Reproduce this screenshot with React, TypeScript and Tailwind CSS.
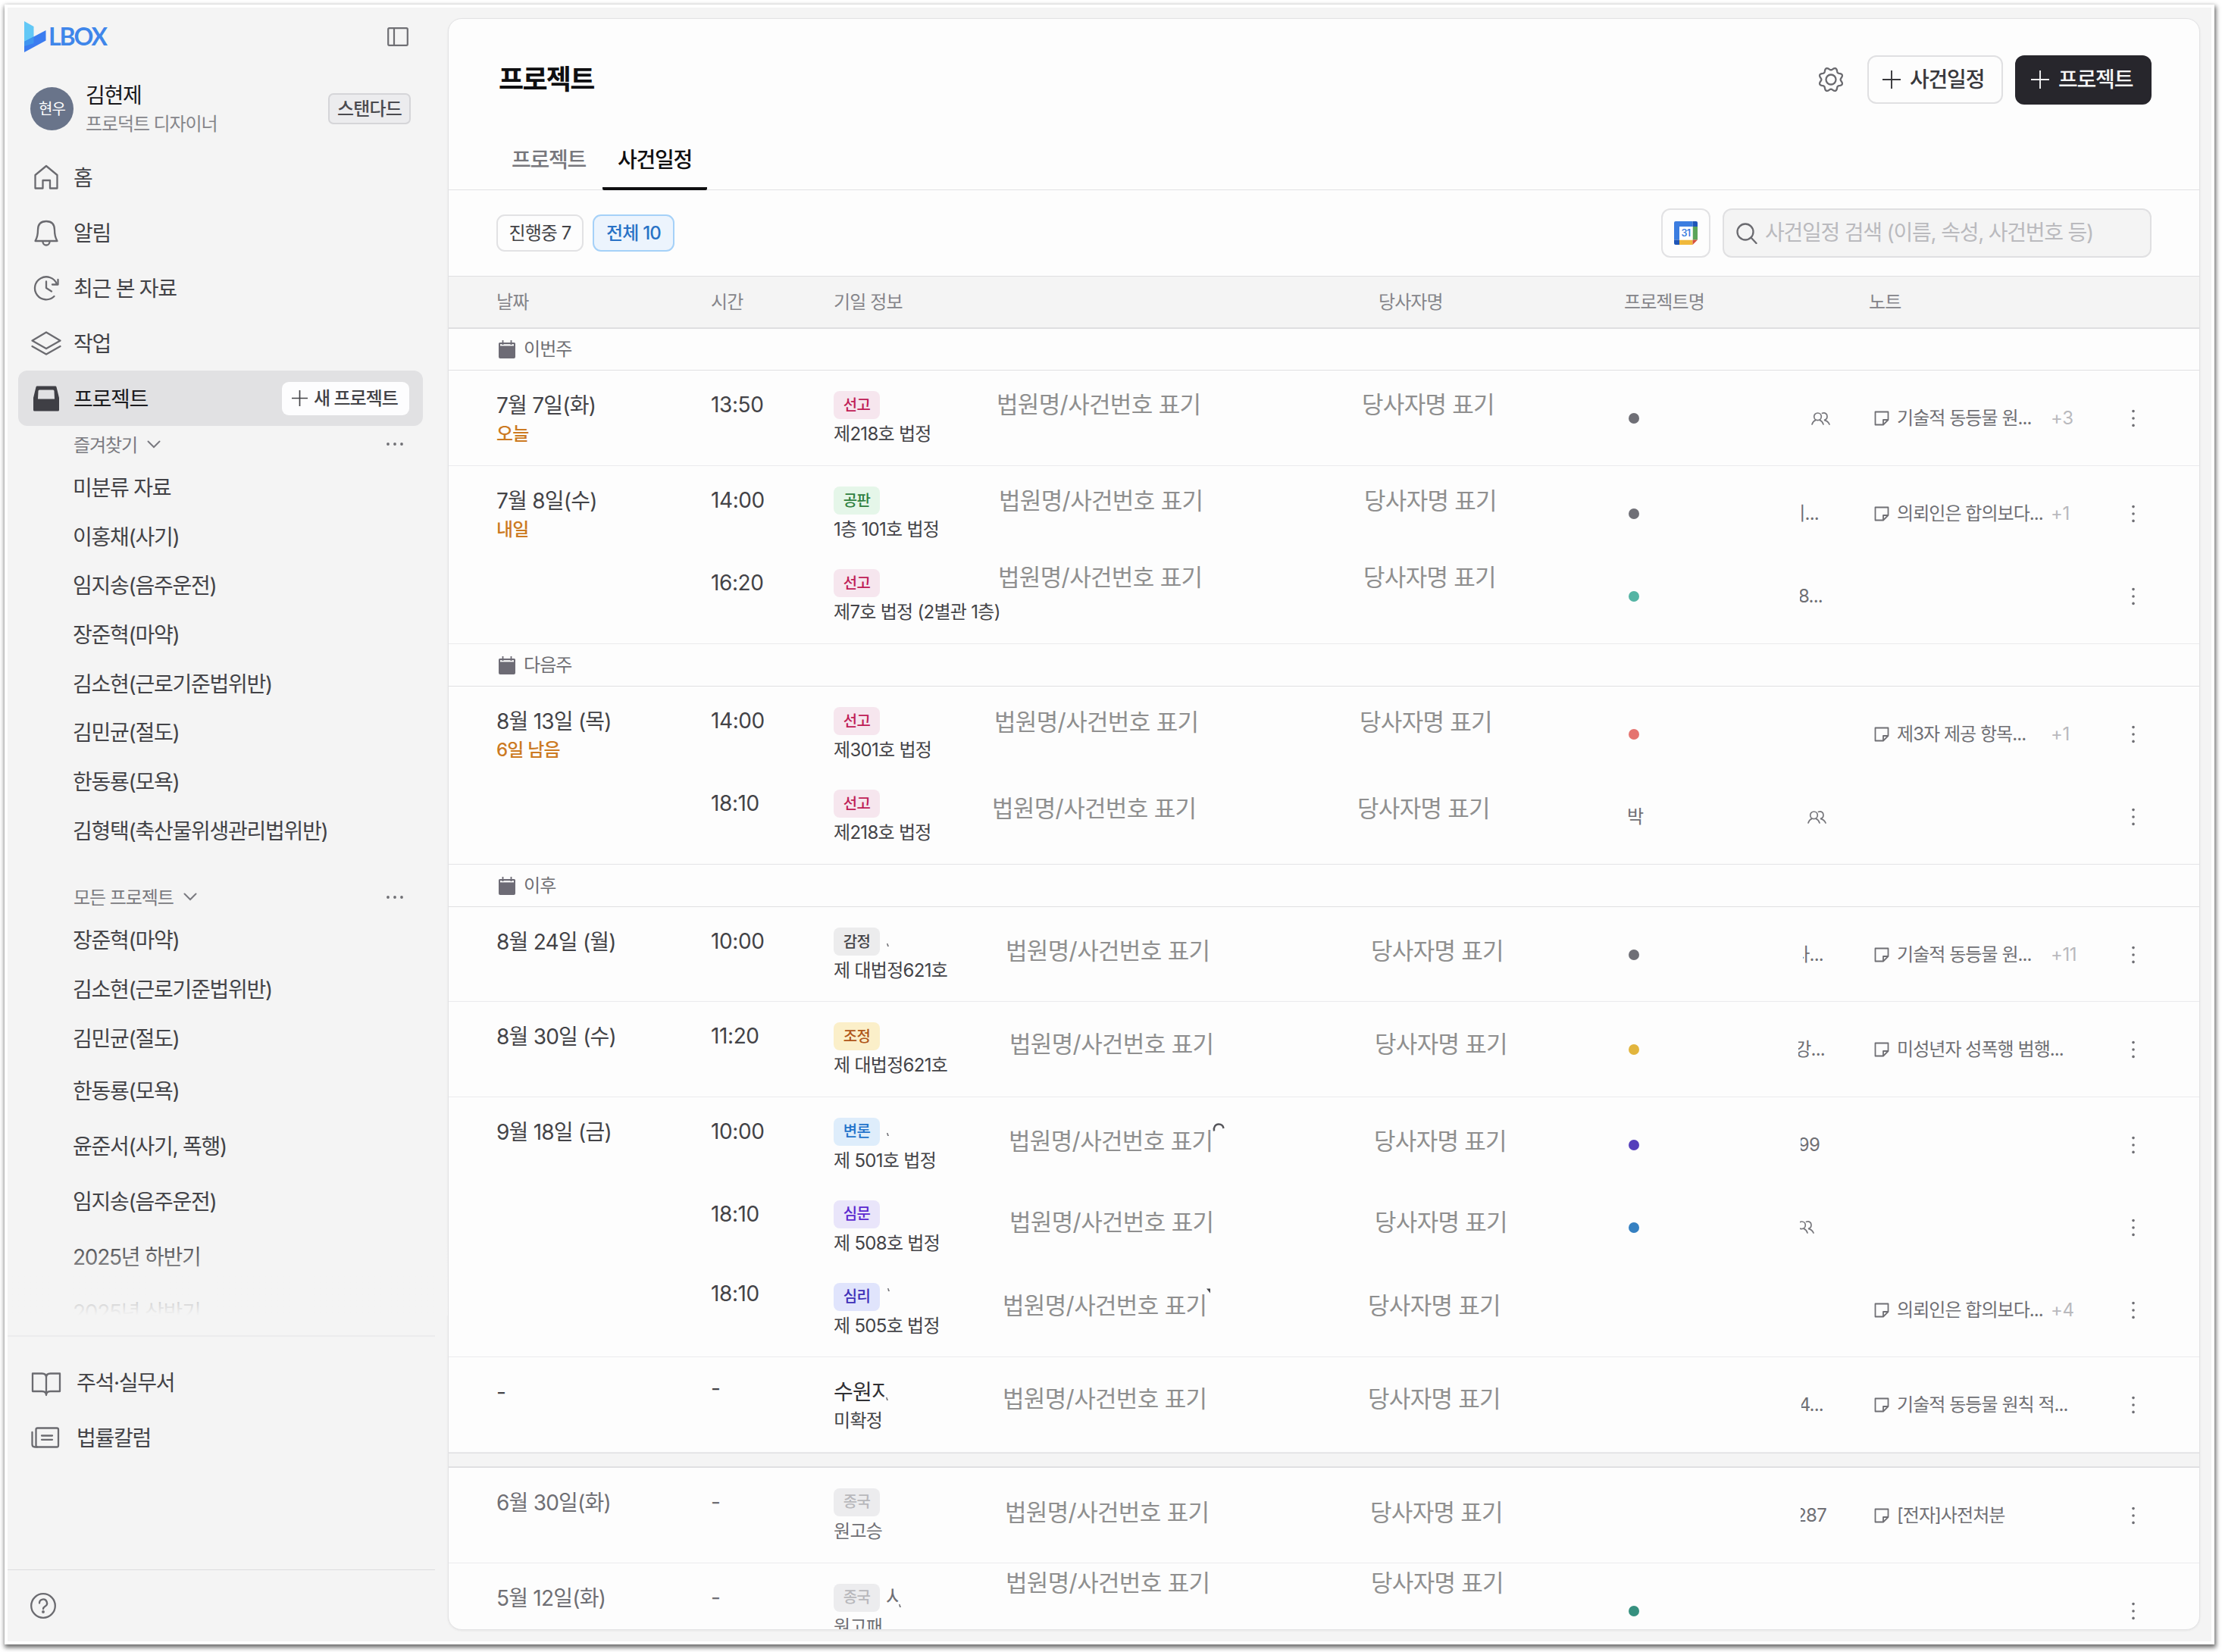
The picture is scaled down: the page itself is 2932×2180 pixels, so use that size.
import type { ReactNode } from 'react'
import clsx from 'clsx'

type Hearing = {
  time: string
  timeClass?: string
  badge?: string
  court?: ReactNode
  room: string
  place: string
  mark?: ReactNode
  dot?: string
  project?: string
  tail?: ReactNode
  tailClass?: string
  note?: string
  more?: string
}

type Day = {
  date: string
  hint?: string
  muted?: boolean
  hearings: Hearing[]
}

const favorites = [
  '미분류 자료',
  '이홍채(사기)',
  '임지송(음주운전)',
  '장준혁(마약)',
  '김소현(근로기준법위반)',
  '김민균(절도)',
  '한동룡(모욕)',
  '김형택(축산물위생관리법위반)',
]

const recentProjects = ['장준혁(마약)', '김소현(근로기준법위반)', '김민균(절도)']
const olderProjects = ['한동룡(모욕)', '윤준서(사기, 폭행)', '임지송(음주운전)', '2025년 하반기', '2025년 상반기']

const badgeColors: Record<string, string> = {
  선고: 'bg-[#f6e6ee] text-[#bf2056]',
  공판: 'bg-[#e5f6e9] text-[#2f8040]',
  감정: 'bg-[#ececed] text-[#444448]',
  조정: 'bg-[#fbefc9] text-[#b0571a]',
  변론: 'bg-[#deedfb] text-[#2474cb]',
  심문: 'bg-[#e9e5fa] text-[#5b28cf]',
  심리: 'bg-[#e0e4fc] text-[#3f30b8]',
  종국: 'bg-[#ececee] text-[#b8b8bc]',
}

const thisWeek: Day[] = [
  {
    date: '7월 7일(화)',
    hint: '오늘',
    hearings: [
      { time: '13:50', badge: '선고', room: '제218호 법정', place: 'ml-[15px] mt-[25px]', dot: 'bg-[#6f6f76]', tail: <PeopleIcon />, tailClass: 'mr-[52px] w-[25px]', note: '기술적 동등물 원...', more: '+3' },
    ],
  },
  {
    date: '7월 8일(수)',
    hint: '내일',
    hearings: [
      { time: '14:00', badge: '공판', room: '1층 101호 법정', place: 'ml-[18px] mt-[26px]', dot: 'bg-[#6f6f76]', tail: '리...', tailClass: 'mr-[67px] w-[23px]', note: '의뢰인은 합의보다...', more: '+1' },
      { time: '16:20', badge: '선고', room: '제7호 법정 (2별관 1층)', place: 'ml-[17px] mt-[18px]', dot: 'bg-[#54b4a4]', tail: '8...', tailClass: 'mr-[62px] w-[30px]' },
    ],
  },
]

const nextWeek: Day[] = [
  {
    date: '8월 13일 (목)',
    hint: '6일 남음',
    hearings: [
      { time: '14:00', badge: '선고', room: '제301호 법정', place: 'ml-[12px] mt-[27px]', dot: 'bg-[#e5736f]', note: '제3자 제공 항목...', more: '+1' },
      { time: '18:10', badge: '선고', room: '제218호 법정', place: 'ml-[9px] mt-[32px]', project: '박', tail: <PeopleIcon />, tailClass: 'mr-[57px] w-[25px]' },
    ],
  },
]

const later: Day[] = [
  {
    date: '8월 24일 (월)',
    hearings: [
      { time: '10:00', badge: '감정', court: <Speck className="mt-2 ml-[9px]" />, room: '제 대법정621호', place: 'ml-[27px] mt-[38px]', dot: 'bg-[#6f6f76]', tail: '사...', tailClass: 'mr-[61px] w-[27px]', note: '기술적 동등물 원...', more: '+11' },
    ],
  },
  {
    date: '8월 30일 (수)',
    hearings: [
      { time: '11:20', badge: '조정', room: '제 대법정621호', place: 'ml-[32px] mt-[36px]', dot: 'bg-[#e2b53d]', tail: '강...', tailClass: 'mr-[59px] w-[35px]', note: '미성년자 성폭행 범행...' },
    ],
  },
  {
    date: '9월 18일 (금)',
    hearings: [
      {
        time: '10:00',
        badge: '변론',
        court: <Speck className="mt-2 ml-[9px]" />,
        room: '제 501호 법정',
        place: 'ml-[31px] mt-[38px]',
        mark: (
          <svg viewBox="0 0 16 11" className="absolute top-[34px] left-[300px] h-[11px] w-4" fill="none" stroke="#55555a" strokeWidth="2.400">
            <path d="M2 10.500C1 5 4 1.500 8 1.500c3.500 0 6 2 6.500 5.500" />
          </svg>
        ),
        dot: 'bg-[#563fbb]',
        tail: '99',
        tailClass: 'mr-[66px] w-[25px]',
      },
      { time: '18:10', badge: '심문', room: '제 508호 법정', place: 'ml-[32px] mt-[36px]', dot: 'bg-[#3580c1]', tail: <PeopleIcon />, tailClass: 'mr-[73px] w-[19px]' },
      {
        time: '18:10',
        timeClass: '-mt-1',
        badge: '심리',
        court: <Speck className="mb-[19px] ml-[10px]" />,
        room: '제 505호 법정',
        place: 'ml-[23px] mt-[37px]',
        mark: (
          <svg viewBox="0 0 6 7" className="absolute top-[34px] left-[292px] h-[7px] w-1.5" fill="#48484c">
            <path d="M0 .500h5v6z" />
          </svg>
        ),
        note: '의뢰인은 합의보다...',
        more: '+4',
      },
    ],
  },
  {
    date: '-',
    hearings: [
      { time: '-', timeClass: '-mt-1', court: <><span className="w-[69px] overflow-hidden text-[28px]">수원지</span><Speck className="mt-[18px]" /></>, room: '미확정', place: 'ml-[23px] mt-[35px]', tail: '4...', tailClass: 'mr-[61px] w-[29px]', note: '기술적 동등물 원칙 적...' },
    ],
  },
]

const closed: Day[] = [
  {
    date: '6월 30일(화)',
    muted: true,
    hearings: [
      { time: '-', badge: '종국', room: '원고승', place: 'ml-[26px] mt-[39px]', tail: '287', tailClass: 'mr-[57px] w-[34px]', note: '[전자]사전처분' },
    ],
  },
  {
    date: '5월 12일(화)',
    muted: true,
    hearings: [
      { time: '-', badge: '종국', court: <><span className="ml-[8px] w-[17px] overflow-hidden text-[28px]">사</span><Speck className="mt-[22px]" /></>, room: '원고패', place: 'ml-[27px] mt-[6px]', dot: 'bg-[#36907f]' },
    ],
  },
]

function Icon({ children, className = 'size-10' }: { children: ReactNode; className?: string }) {
  return (
    <svg viewBox="0 0 40 40" className={clsx('shrink-0', className)} fill="none" stroke="#6b6b70" strokeWidth="2.300" strokeLinejoin="round" strokeLinecap="round">
      {children}
    </svg>
  )
}

function Speck({ className }: { className: string }) {
  return (
    <svg viewBox="0 0 3 4" className={clsx('h-1 w-[3px] shrink-0', className)} fill="#77777c">
      <path d="M0 0h1.500L3 4H1z" />
    </svg>
  )
}

function PeopleIcon() {
  return (
    <svg viewBox="0 0 25 17" className="h-[17px] w-[25px] shrink-0" fill="none" stroke="#77777c" strokeWidth="1.700" strokeLinecap="round">
      <circle cx="8.500" cy="5.800" r="4.800" />
      <path d="M1 16c1-3 2.700-4.800 4.800-5.600M16 16c-1-3-2.700-4.800-4.800-5.600" />
      <path d="M14.500 1.300c4-1.200 6.500 1 6.500 4.200 0 2.600-1.500 4.400-4 4.900 3 .6 5.500 2.300 7 5.600" />
    </svg>
  )
}

function NoteIcon() {
  return (
    <svg viewBox="0 0 20 20" className="size-5 shrink-0" fill="none" stroke="#6f6f74" strokeWidth="1.800" strokeLinejoin="round">
      <path d="M1.500 1.500h17v10.500l-6.500 6.500H1.500z" />
      <path d="M18.500 12H12v6.500" />
    </svg>
  )
}

function CalendarIcon() {
  return (
    <svg viewBox="0 0 22 24" className="h-6 w-[22px] shrink-0">
      <path d="M1.500 3h19a1.500 1.500 0 0 1 1.500 1.500V22a2 2 0 0 1-2 2H2a2 2 0 0 1-2-2V4.500A1.500 1.500 0 0 1 1.500 3z" fill="#6d6b75" />
      <path d="M2 5.200h18v2.200H2z" fill="#fdfdfd" />
      <path d="M5.500 0v6M16.500 0v6" stroke="#6d6b75" strokeWidth="1.800" />
    </svg>
  )
}

function PlusIcon({ className }: { className: string }) {
  return (
    <svg viewBox="0 0 24 24" className={clsx('shrink-0', className)} fill="none" stroke="currentColor" strokeWidth="1.900">
      <path d="M12 0v24M0 12h24" />
    </svg>
  )
}

function GearIcon() {
  const points = Array.from({ length: 96 }, (_, i) => {
    const a = (i / 96) * Math.PI * 2
    const r = 14.3 + 1.7 * Math.cos(8 * a + Math.PI)
    return `${(20 + r * Math.cos(a)).toFixed(2)},${(20 + r * Math.sin(a)).toFixed(2)}`
  })
  return (
    <Icon>
      <polygon points={points.join(' ')} />
      <circle cx="20" cy="20" r="6.500" />
    </Icon>
  )
}

function GoogleCalendarIcon() {
  return (
    <svg viewBox="0 0 31 31" className="size-[31px]">
      <path d="M2 0h22.500v7H7v17.500H0V2a2 2 0 0 1 2-2z" fill="#3b7de0" />
      <path d="M24.500 0H29a2 2 0 0 1 2 2v5h-6.500z" fill="#1f56b8" />
      <path d="M24.500 7H31v17.500h-6.500z" fill="#5ba55a" />
      <path d="M7 24.500h17.500V31H7z" fill="#f0b93c" />
      <path d="M0 24.500h7V31H2a2 2 0 0 1-2-2z" fill="#1f56b8" />
      <path d="M24.500 24.500H31L24.500 31z" fill="#d64f3c" />
      <path d="M7 7h17.500v17.500H7z" fill="#fff" />
      <text x="15.400" y="20.200" textAnchor="middle" fontSize="12.500" fontWeight="600" fontFamily="Inter, sans-serif" fill="#3b7de0">31</text>
    </svg>
  )
}

function NavItem({ icon, label }: { icon: ReactNode; label: string }) {
  return (
    <div className="flex h-[73px] items-center gap-4 pl-[31px] text-[28px] text-[#434347]">
      {icon}
      <span className="pt-[3px]">{label}</span>
    </div>
  )
}

function ProjectLink({ name, className }: { name: string; className: string }) {
  return <div className={clsx('flex shrink-0 items-center pt-[3px] pl-[86px]', className)}>{name}</div>
}

function SectionTitle({ label }: { label: string }) {
  return (
    <div className="flex h-12 shrink-0 items-center pr-[59px] pl-[87px] text-2xl tracking-[-1.05px] text-[#7a7a80]">
      <span className="pt-[3px]">{label}</span>
      <svg viewBox="0 0 18 11" className="ml-[13px] h-[11px] w-[18px]" fill="none" stroke="#7a7a80" strokeWidth="2" strokeLinecap="round">
        <path d="M1.500 1.500 9 9l7.500-7.500" />
      </svg>
      <svg viewBox="0 0 22 4" className="ml-auto h-1 w-[22px]" fill="#6f6f74">
        <circle cx="2" cy="2" r="1.900" />
        <circle cx="11" cy="2" r="1.900" />
        <circle cx="20" cy="2" r="1.900" />
      </svg>
    </div>
  )
}

function Sidebar() {
  return (
    <aside className="flex w-[581px] shrink-0 flex-col tracking-[-1.25px]">
      <div className="flex h-[76px] shrink-0 items-center pr-[52px] pl-[22px]">
        <svg viewBox="0 0 29 41" className="h-[41px] w-[29px]">
          <path d="M0 0l12.500 7v22L0 33z" fill="#62c8f6" />
          <path d="M0 27l28.500-15v13.500L0 41z" fill="#3b7cf0" />
          <path d="M0 27l12.500-6.600v8.800L0 33z" fill="#3f95ef" />
        </svg>
        <span className="ml-[3px] font-['Lato'] text-[32px] leading-none font-bold tracking-[-2.1px] text-[#3f86ea]">LBOX</span>
        <svg viewBox="0 0 28 25" className="ml-auto h-[25px] w-7" fill="none" stroke="#6f6f74" strokeWidth="2.200">
          <rect x="1.200" y="1.200" width="25.600" height="22.600" rx="1.500" />
          <path d="M9 1v23" />
        </svg>
      </div>

      <div className="flex h-[111px] shrink-0 items-center pt-1 pr-[49px] pl-[30px]">
        <div className="flex size-[57px] items-center justify-center rounded-full bg-[#69748a] text-xl tracking-[-0.9px] text-white">현우</div>
        <div className="ml-4 pt-[3px] leading-[38px]">
          <div className="text-[28px] text-[#18181b]">김현제</div>
          <div className="text-2xl leading-[38px] tracking-[-1.1px] text-[#85858a]">프로덕트 디자이너</div>
        </div>
        <span className="ml-auto flex h-[41px] items-center rounded-[7px] border-2 border-[#d5d5d8] bg-[#ececee] px-[10px] text-2xl font-medium tracking-[-0.8px] text-[#4a4a4f]">스탠다드</span>
      </div>

      <nav className="shrink-0">
        <NavItem
          label="홈"
          icon={<Icon><path d="M5.500 34.500V17L20 5l14.500 12v17.500H25V24h-9.500v10.500z" /></Icon>}
        />
        <NavItem
          label="알림"
          icon={<Icon><path d="M5.500 31c3-5 3.500-9 3.500-14.500C9 9 13 5 20 5s11 4 11 11.500C31 22 31.500 26 34.500 31z" /><path d="M15.500 32a4.500 4.500 0 0 0 9 0" /></Icon>}
        />
        <NavItem
          label="최근 본 자료"
          icon={<Icon><path d="M34 15A15 15 0 1 0 30.500 31" /><path d="M35.500 9v6.500H28M20 11.500v8.500l7 4.500" /></Icon>}
        />
        <NavItem
          label="작업"
          icon={<Icon><path d="M1.500 16.500 20 5.500l18.500 11L20 27z" /><path d="M1.500 24 20 34.500 38.500 24" /></Icon>}
        />
        <div className="mr-[33px] ml-[14px] flex h-[73px] items-center rounded-xl bg-[#e1e1e3] pr-[18px] pl-[17px]">
          <svg viewBox="0 0 40 40" className="size-10" fill="#3f3f45" fillRule="evenodd">
            <path d="M8 3.500h24a1.500 1.500 0 0 1 1.500 1.200L37 19v16a1.500 1.500 0 0 1-1.500 1.500h-31A1.500 1.500 0 0 1 3 35V19L6.500 4.700A1.500 1.500 0 0 1 8 3.500zM11 8.500a1.500 1.500 0 0 0-1.500 1.500L9 20.500h22L30.500 10A1.500 1.500 0 0 0 29 8.500z" />
          </svg>
          <span className="ml-4 pt-[2px] text-[28px] text-[#1c1c1f]">프로젝트</span>
          <button className="ml-auto flex h-11 w-[168px] items-center gap-[8px] rounded-[9px] bg-[#fdfdfe] pl-[13px] text-2xl font-medium tracking-[-1px] text-[#434347]">
            <PlusIcon className="size-[21px]" />
            새 프로젝트
          </button>
        </div>
      </nav>

      <div className="relative flex h-[1174px] shrink-0 flex-col overflow-hidden text-[28px] text-[#434347]">
        <SectionTitle label="즐겨찾기" />
        {favorites.map((name) => (
          <ProjectLink key={name} name={name} className="h-[64.7px]" />
        ))}
        <div className="h-8 shrink-0" />
        <SectionTitle label="모든 프로젝트" />
        {recentProjects.map((name) => (
          <ProjectLink key={name} name={name} className="h-[64.7px]" />
        ))}
        {olderProjects.map((name) => (
          <ProjectLink key={name} name={name} className="h-[73px]" />
        ))}
        <div className="absolute inset-x-0 bottom-0 h-[100px] bg-linear-to-b from-[#f4f4f4]/0 to-[#f4f4f4]" />
      </div>

      <div className="mt-[26px] mr-[17px] h-0.5 shrink-0 bg-[#ebebec]" />
      <div className="mt-[23px] shrink-0">
        <div className="flex h-[73px] items-center gap-5 pl-[31px] text-[28px] text-[#434347]">
          <Icon><path d="M2 8.500h12.500q5.500 0 5.500 5 0-5 5.500-5H38V32H25.500q-5.500 0-5.500 5 0-5-5.500-5H2zM20 13v23" /></Icon>
          <span className="pt-[2px]">주석·실무서</span>
        </div>
        <div className="flex h-[73px] items-center gap-5 pl-[31px] text-[28px] text-[#434347]">
          <Icon><rect x="6.500" y="7.500" width="29.500" height="25" rx="2" /><path d="M1.500 13v16q0 3.500 3.500 3.500h3M14 17.500h14M14 22.800h14" /></Icon>
          <span className="pt-[2px]">법률칼럼</span>
        </div>
      </div>
      <div className="mt-auto mr-[17px] h-px shrink-0 bg-[#dcdcde]" />
      <div className="flex h-[94px] shrink-0 items-center pl-[27px]">
        <Icon>
          <circle cx="20" cy="20" r="15.800" />
          <path d="M15 16.500a5 5 0 1 1 7.500 4.300c-1.700 1-2.500 1.700-2.500 3.400" />
          <circle cx="20" cy="28" r=".8" fill="#6b6b70" />
        </Icon>
      </div>
    </aside>
  )
}

function GroupRow({ label, className = 'h-14' }: { label: string; className?: string }) {
  return (
    <div className={clsx('flex shrink-0 items-center border-b border-[#e0e0e2] pl-[66px] text-2xl tracking-[-0.9px] text-[#6f6f74]', className)}>
      <CalendarIcon />
      <span className="ml-[11px]">{label}</span>
    </div>
  )
}

function HearingRow({ hearing, muted }: { hearing: Hearing; muted?: boolean }) {
  return (
    <div className="flex h-[109px]">
      <div className={clsx('w-[163px] pt-[25px] pl-px text-[28px] leading-10 tracking-[-0.4px]', muted ? 'text-[#6f6f74]' : 'text-[#434347]')}>
        <div className={hearing.timeClass}>{hearing.time}</div>
      </div>
      <div className="w-[200px] shrink-0 pt-[27px] whitespace-nowrap">
        <div className={clsx('flex h-[37px] items-center', muted ? 'text-[#6f6f74]' : 'text-[#303034]')}>
          {hearing.badge && (
            <span className={clsx('flex h-[37px] w-[61px] items-center justify-center rounded-lg text-xl font-medium', badgeColors[hearing.badge])}>
              {hearing.badge}
            </span>
          )}
          {hearing.court}
        </div>
        <div className={clsx('text-2xl leading-10 tracking-[-0.7px]', muted ? 'text-[#6f6f74]' : 'text-[#434347]')}>{hearing.room}</div>
      </div>
      <div className="relative w-[482px] text-[31px] leading-10 tracking-[-0.65px] whitespace-nowrap text-[#8f8f8f]">
        <div className={hearing.place}>법원명/사건번호 표기</div>
        {hearing.mark}
      </div>
      <div className="w-[362px] text-[31px] leading-10 tracking-[-0.7px] whitespace-nowrap text-[#8f8f8f]">
        <div className={hearing.place}>당사자명 표기</div>
      </div>
      <div className="mt-[43px] flex h-10 w-[323px] items-center text-2xl text-[#6f6f74]">
        {hearing.dot && <span className={clsx('ml-[5px] size-[14px] rounded-full', hearing.dot)} />}
        {hearing.project && <span className="ml-[3px]">{hearing.project}</span>}
        {hearing.tail && <span className={clsx('ml-auto flex justify-end overflow-hidden', hearing.tailClass)}>{hearing.tail}</span>}
      </div>
      <div className="mt-[43px] flex h-10 w-[337px] items-center pl-[6px] text-2xl whitespace-nowrap text-[#6f6f74]">
        {hearing.note && (
          <>
            <NoteIcon />
            <span className="ml-[10px] w-[203px] tracking-[-0.95px]">{hearing.note}</span>
            <span className="tracking-[-0.4px] text-[#b9b9bd]">{hearing.more}</span>
          </>
        )}
      </div>
      <svg viewBox="0 0 4 24" className="mt-[51px] ml-[9px] h-6 w-1" fill="#6f6f74">
        <circle cx="2" cy="2.600" r="1.800" />
        <circle cx="2" cy="12" r="1.800" />
        <circle cx="2" cy="21.400" r="1.800" />
      </svg>
    </div>
  )
}

function DayRows({ day, className }: { day: Day; className: string }) {
  return (
    <div className={clsx('flex shrink-0 border-b pl-[62px]', className)}>
      <div className={clsx('w-[283px] pt-[26px] pl-px text-[28px] leading-10', day.muted ? 'text-[#6f6f74]' : 'text-[#434347]')}>
        {day.date}
        {day.hint && <div className="-mt-0.5 text-2xl leading-10 font-medium text-[#cc7a22]">{day.hint}</div>}
      </div>
      <div>
        {day.hearings.map((hearing, i) => (
          <HearingRow key={i} hearing={hearing} muted={day.muted} />
        ))}
      </div>
    </div>
  )
}

export default function App() {
  return (
    <div className="h-[2180px] w-[2932px] overflow-hidden bg-white pt-[6px] pl-[6px] font-['Inter','Noto_Sans_CJK_KR',sans-serif] tracking-[-0.77px]">
      <div className="flex h-[2164px] w-[2916px] border-4 border-white bg-[#f4f4f4] shadow-[1px_3px_6px_1px_rgba(0,0,0,0.6)]">
        <Sidebar />

        <main className="mt-[14px] flex h-[2127px] w-[2312px] flex-col overflow-hidden rounded-[18px] border border-[#e2e2e4] bg-[#fdfdfd] shadow-[0_1px_3px_rgba(0,0,0,0.06)]">
          <header className="flex h-[160px] shrink-0 items-center pr-[63px] pl-[66px] tracking-[-1.2px]">
            <h1 className="text-4xl font-bold tracking-[-1.7px] text-[#0f0f11]">프로젝트</h1>
            <div className="ml-auto flex items-center">
              <GearIcon />
              <button className="ml-7 flex h-16 w-[179px] items-center gap-3 rounded-xl border-2 border-[#e0e0e2] pl-[18px] text-[28px] font-medium text-[#38383c]">
                <PlusIcon className="size-6" />
                사건일정
              </button>
              <button className="ml-4 flex h-[65px] w-[180px] items-center gap-3 rounded-xl bg-[#27262c] pl-[21px] text-[28px] font-medium text-[#f4f4f5]">
                <PlusIcon className="size-6" />
                프로젝트
              </button>
            </div>
          </header>

          <div className="flex h-[66px] shrink-0 border-b border-[#e2e2e4] pl-[63px] text-[28px] font-medium tracking-[-1.25px]">
            <div className="px-5 pt-[6px] leading-10 text-[#77777c]">프로젝트</div>
            <div className="ml-[2px] h-[66px] rounded-b-xs border-b-4 border-[#0f0f11] px-5 pt-[6px] leading-10 text-[#0f0f11]">사건일정</div>
          </div>

          <div className="flex h-[113px] shrink-0 items-center pr-[63px] pl-[63px] text-2xl">
            <div className="flex h-[49px] w-[115px] items-center justify-center rounded-[11px] border-2 border-[#e2e2e4] tracking-[-0.9px] text-[#434347]">진행중 7</div>
            <div className="ml-3 flex h-[49px] w-[108px] items-center justify-center rounded-[11px] border-2 border-[#a5d1f8] bg-[#ecf4fd] font-medium text-[#2872c6]">전체 10</div>
            <div className="ml-auto flex h-[65px] w-[65px] items-center justify-center rounded-xl border-2 border-[#e2e2e4]">
              <GoogleCalendarIcon />
            </div>
            <div className="ml-4 flex h-[65px] w-[566px] items-center rounded-xl border-2 border-[#e0e0e2] bg-[#f4f4f4] pl-4 text-[28px] text-[#bababe]">
              <svg viewBox="0 0 28 28" className="size-7" fill="none" stroke="#6b6b70" strokeWidth="2.300" strokeLinecap="round">
                <circle cx="12" cy="12" r="10.500" />
                <path d="M19.500 19.500l7 7.500" />
              </svg>
              <span className="ml-[10px] pt-px tracking-[-1.22px]">사건일정 검색 (이름, 속성, 사건번호 등)</span>
            </div>
          </div>

          <div className="flex h-[70px] shrink-0 items-center border-t border-b-2 border-[#dfdfe1] bg-[#f4f4f4] pl-[63px] text-2xl tracking-[-0.9px] text-[#85858a]">
            <div className="w-[283px]">날짜</div>
            <div className="w-[162px]">시간</div>
            <div className="w-[719px]">기일 정보</div>
            <div className="w-[324px]">당사자명</div>
            <div className="w-[323px]">프로젝트명</div>
            <div>노트</div>
          </div>

          <GroupRow label="이번주" className="h-[55px]" />
          {thisWeek.map((day) => (
            <DayRows key={day.date} day={day} className="border-[#ebebed] pb-4 last:border-[#e0e0e2]" />
          ))}
          <GroupRow label="다음주" />
          {nextWeek.map((day) => (
            <DayRows key={day.date} day={day} className="border-[#e4e4e6] pb-4" />
          ))}
          <GroupRow label="이후" />
          {later.map((day) => (
            <DayRows key={day.date} day={day} className="border-[#ebebed] pb-[15.4px]" />
          ))}
          <div className="h-5 shrink-0 border-t border-b-2 border-[#e0e0e2] bg-[#f4f4f4]" />
          {closed.map((day) => (
            <DayRows key={day.date} day={day} className="border-[#ebebed] pb-4" />
          ))}
        </main>
      </div>
    </div>
  )
}
